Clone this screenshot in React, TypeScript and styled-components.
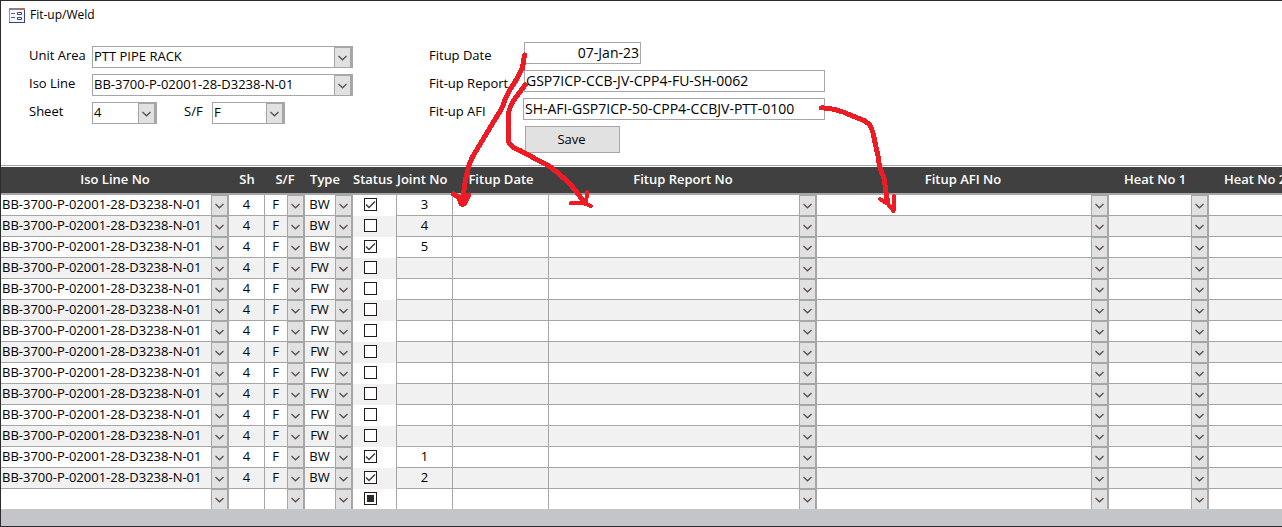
import React, { useEffect, useRef } from "react";
import styled, { createGlobalStyle, css } from "styled-components";

const line = "#a6a6a6";
const face = "#e1e1e1";
const dark = "#2b2b2e";

const GlobalStyle = createGlobalStyle`
  *, *::before, *::after { box-sizing: border-box; }
  html, body, #root { height: 100%; }
  body { margin: 0; overflow: hidden; background: #fff; }
  body, input, select, button {
    font-family: "Open Sans", "Noto Sans", Calibri, sans-serif;
    font-size: 13px;
    line-height: 18px;
    color: #000;
  }
`;

const Frame = styled.main`
  position: relative;
  display: flex;
  flex-direction: column;
  min-height: 100%;
  overflow: hidden;
  background: #fff;
  border: solid ${dark};
  border-width: 1px 0 1px 1px;
`;

const TitleBar = styled.header`
  display: flex;
  align-items: center;
  gap: 5px;
  height: 28px;
  padding-left: 8px;
`;

const Title = styled.h1`
  margin: 0;
  font-size: 12px;
  font-weight: 400;
`;

const FormHeader = styled.form`
  display: flex;
  align-items: flex-start;
  gap: 76px;
  height: 136px;
  padding: 13px 0 0 28px;
`;

const FieldColumn = styled.div<{ $inset?: number }>`
  display: flex;
  flex-direction: column;
  gap: 6px;
  padding-top: ${(p) => p.$inset ?? 0}px;
`;

const FieldRow = styled.div`
  display: flex;
  align-items: center;
  height: 22px;
`;

const Label = styled.label<{ $w: number; $low?: boolean }>`
  flex: none;
  width: ${(p) => p.$w}px;
  padding: ${(p) => (p.$low ? "4px 0 0" : "0 0 4px")};
  white-space: nowrap;
`;

const SecondPair = styled.div`
  display: flex;
  align-items: center;
  padding-left: 27px;
`;

const TextBox = styled.input<{ $w: number; $right?: boolean }>`
  width: ${(p) => p.$w}px;
  height: 22px;
  padding: 0 1px 2px;
  border: 1px solid ${line};
  border-radius: 0;
  background: #fff;
  font-size: 14px;
  text-align: ${(p) => (p.$right ? "right" : "left")};
`;

const SaveButton = styled.button`
  width: 95px;
  height: 27px;
  margin-left: 96px;
  padding: 0 2px 2px 0;
  border: 1px solid ${line};
  background: ${face};
`;

const ComboBox = styled.div<{ $w?: number; $framed?: boolean }>`
  display: grid;
  width: ${(p) => (p.$w ? `${p.$w}px` : "100%")};
  height: ${(p) => (p.$framed ? 22 : 20)}px;
  ${(p) => p.$framed && css`border: 1px solid ${line};`}
`;

const Select = styled.select<{ $center?: boolean }>`
  grid-area: 1 / 1;
  appearance: none;
  width: 100%;
  min-width: 0;
  height: 100%;
  margin: 0;
  padding: 0 ${(p) => (p.$center ? 20 : 18)}px 3px 1px;
  border: 0;
  border-radius: 0;
  background: transparent;
  text-align-last: ${(p) => (p.$center ? "center" : "left")};
`;

const DropFace = styled.span`
  grid-area: 1 / 1;
  justify-self: end;
  display: flex;
  align-items: center;
  justify-content: center;
  width: 18px;
  height: 100%;
  border: 1px solid ${line};
  border-right-width: 2px;
  background: ${face};
  pointer-events: none;
`;

const Sheet = styled.section`
  overflow: hidden;
  border-top: 1px solid ${line};
  padding-top: 1px;
`;

const Table = styled.table`
  width: 1308px;
  table-layout: fixed;
  border-collapse: separate;
  border-spacing: 0;
`;

const HeadCell = styled.th<{ $shift?: boolean }>`
  height: 28px;
  padding: 0 ${(p) => (p.$shift ? 8 : 0)}px 2px 0;
  border-bottom: 2px solid ${line};
  background: #404040;
  color: #fff;
  font-weight: 600;
  white-space: nowrap;
`;

const Row = styled.tr`
  background: #fff;
  &:nth-child(even) { background: #f1f1f1; }
  &:last-child > td { height: 20px; border-bottom: 0; }
`;

const Cell = styled.td<{ $ruled?: boolean }>`
  height: 21px;
  padding: 0;
  border-bottom: 1px solid ${line};
  border-right: ${(p) => (p.$ruled ? `1px solid ${line}` : "0")};
`;

const StatusCell = styled.td`
  height: 21px;
  padding: 0 8px 0 0;
  border-right: 1px solid ${line};
`;

const CellInput = styled.input`
  display: block;
  width: 100%;
  height: 20px;
  padding: 0 0 3px;
  border: 0;
  background: transparent;
  text-align: center;
`;

const CheckWrap = styled.div`
  display: grid;
  place-items: center;
  height: 20px;
  padding-bottom: 2px;
  > * { grid-area: 1 / 1; }
  > svg { pointer-events: none; }
`;

const CheckBox = styled.input`
  appearance: none;
  width: 13px;
  height: 13px;
  margin: 0;
  border: 1px solid #1f1a1c;
  background: #fff;
`;

const Footer = styled.footer`
  flex: 1;
  min-height: 17px;
  background: #c4c5c9;
`;

const Ink = styled.svg`
  position: absolute;
  top: -1px;
  left: -1px;
  pointer-events: none;
`;

function DropArrow() {
  return (
    <DropFace>
      <svg width="9" height="6" viewBox="0 0 9 6" fill="none" stroke="#5b4a4c" strokeWidth="1.2">
        <path d="M0.5 1 L4.5 4.8 L8.5 1" />
      </svg>
    </DropFace>
  );
}

type ComboProps = { value: string; id?: string; label?: string; width?: number; framed?: boolean; center?: boolean };

function Combo({ value, id, label, width, framed, center }: ComboProps) {
  return (
    <ComboBox $w={width} $framed={framed}>
      <Select id={id} aria-label={label} $center={center} defaultValue={value}>
        <option value={value}>{value}</option>
      </Select>
      <DropArrow />
    </ComboBox>
  );
}

type Status = "on" | "off" | "mixed";

function StatusBox({ status, label }: { status: Status; label: string }) {
  const ref = useRef<HTMLInputElement>(null);
  useEffect(() => {
    if (ref.current) ref.current.indeterminate = status === "mixed";
  }, [status]);
  return (
    <CheckWrap>
      <CheckBox ref={ref} type="checkbox" aria-label={label} defaultChecked={status === "on"} />
      {status === "on" && (
        <svg width="13" height="13" viewBox="0 0 13 13" fill="none" stroke="#3a3335" strokeWidth="1.3">
          <path d="M2 6.5 L5 9.5 L11 3.5" />
        </svg>
      )}
      {status === "mixed" && (
        <svg width="13" height="13" viewBox="0 0 13 13">
          <rect x="3" y="3" width="7" height="7" fill="#2a2a2a" />
        </svg>
      )}
    </CheckWrap>
  );
}

function FormIcon() {
  return (
    <svg width="16" height="15" viewBox="0 0 16 15">
      <rect x="0.5" y="0.5" width="15" height="14" fill="#f4f7fd" stroke="#8c97bb" />
      <rect x="0" y="0" width="16" height="2" fill="#8a7f8c" />
      <rect x="11" y="0" width="4" height="2" fill="#c46a3c" />
      <path d="M2 5.5h4M2 9.5h4" stroke="#5a6078" />
      <path d="M8.5 4.5h4v2h-4zM8.5 9.5h4v2h-4z" fill="#fff" stroke="#3b466f" />
      <path d="M15.5 2v13M0 14.5h16" stroke="#34447e" />
    </svg>
  );
}

const columns: { name: string; width: number; shift?: boolean }[] = [
  { name: "Iso Line No", width: 228 },
  { name: "Sh", width: 36 },
  { name: "S/F", width: 40 },
  { name: "Type", width: 48, shift: true },
  { name: "Status", width: 44, shift: true },
  { name: "Joint No", width: 56, shift: true },
  { name: "Fitup Date", width: 96 },
  { name: "Fitup Report No", width: 268 },
  { name: "Fitup AFI No", width: 292 },
  { name: "Heat No 1", width: 100, shift: true },
  { name: "Heat No 2", width: 100, shift: true },
];

type Joint = { iso: string; sh: string; sf: string; type: string; status: Status; joint: string };

const weld = (type: string, status: Status, joint = ""): Joint => ({
  iso: "BB-3700-P-02001-28-D3238-N-01",
  sh: "4",
  sf: "F",
  type,
  status,
  joint,
});

const joints: Joint[] = [
  weld("BW", "on", "3"),
  weld("BW", "off", "4"),
  weld("BW", "on", "5"),
  ...Array.from({ length: 9 }, () => weld("FW", "off")),
  weld("BW", "on", "1"),
  weld("BW", "on", "2"),
  { iso: "", sh: "", sf: "", type: "", status: "mixed", joint: "" },
];

export default function App() {
  return (
    <>
      <GlobalStyle />
      <Frame>
        <TitleBar>
          <FormIcon />
          <Title>Fit-up/Weld</Title>
        </TitleBar>
        <FormHeader onSubmit={(e) => e.preventDefault()}>
          <FieldColumn $inset={4}>
            <FieldRow>
              <Label $w={63} htmlFor="unit">Unit Area</Label>
              <Combo id="unit" value="PTT PIPE RACK" width={261} framed />
            </FieldRow>
            <FieldRow>
              <Label $w={63} htmlFor="iso">Iso Line</Label>
              <Combo id="iso" value="BB-3700-P-02001-28-D3238-N-01" width={261} framed />
            </FieldRow>
            <FieldRow>
              <Label $w={63} htmlFor="sheet">Sheet</Label>
              <Combo id="sheet" value="4" width={65} framed />
              <SecondPair>
                <Label $w={28} htmlFor="sf">S/F</Label>
                <Combo id="sf" value="F" width={73} framed />
              </SecondPair>
            </FieldRow>
          </FieldColumn>
          <FieldColumn>
            <FieldRow>
              <Label $w={95} $low htmlFor="date">Fitup Date</Label>
              <TextBox id="date" $w={117} $right defaultValue="07-Jan-23" />
            </FieldRow>
            <FieldRow>
              <Label $w={95} $low htmlFor="report">Fit-up Report</Label>
              <TextBox id="report" $w={301} defaultValue="GSP7ICP-CCB-JV-CPP4-FU-SH-0062" />
            </FieldRow>
            <FieldRow>
              <Label $w={94} $low htmlFor="afi">Fit-up AFI</Label>
              <TextBox id="afi" $w={302} defaultValue="SH-AFI-GSP7ICP-50-CPP4-CCBJV-PTT-0100" />
            </FieldRow>
            <SaveButton type="submit">Save</SaveButton>
          </FieldColumn>
        </FormHeader>
        <Sheet>
          <Table>
            <colgroup>
              {columns.map((c) => (
                <col key={c.name} width={c.width} />
              ))}
            </colgroup>
            <thead>
              <tr>
                {columns.map((c) => (
                  <HeadCell key={c.name} scope="col" $shift={c.shift}>{c.name}</HeadCell>
                ))}
              </tr>
            </thead>
            <tbody>
              {joints.map((j, i) => (
                <Row key={i}>
                  <Cell><Combo label="Iso Line No" value={j.iso} /></Cell>
                  <Cell $ruled><CellInput aria-label="Sh" defaultValue={j.sh} /></Cell>
                  <Cell><Combo label="S/F" value={j.sf} center /></Cell>
                  <Cell><Combo label="Type" value={j.type} center /></Cell>
                  <StatusCell><StatusBox label="Status" status={j.status} /></StatusCell>
                  <Cell $ruled><CellInput aria-label="Joint No" defaultValue={j.joint} /></Cell>
                  <Cell $ruled><CellInput aria-label="Fitup Date" /></Cell>
                  <Cell><Combo label="Fitup Report No" value="" /></Cell>
                  <Cell><Combo label="Fitup AFI No" value="" /></Cell>
                  <Cell><Combo label="Heat No 1" value="" /></Cell>
                  <Cell><Combo label="Heat No 2" value="" /></Cell>
                </Row>
              ))}
            </tbody>
          </Table>
        </Sheet>
        <Footer />
        <Ink width="1282" height="527" viewBox="0 0 1282 527" fill="none" stroke="#ed1c24" strokeWidth="5" strokeLinecap="round" strokeLinejoin="round" shapeRendering="crispEdges" aria-hidden="true">
          <path d="M524.5 55 L522.5 68 L515 82 C509 90 505 99 502 108 L488 131 L473 156 C468 165 467 174 465.5 180 L462 203" />
          <path d="M453.5 194 L460 198 L469 195 L464 204 L461 204 L459 197" fill="#ed1c24" />
          <path d="M525 85 L514 100 C509 108 508 112 508 118 L508.500 142 C511 146 513 148 519 150 L548 165.500 C557 171 562 177 568 182 C575 189 580 197 585 203" />
          <path strokeWidth="4" d="M587 192 L586 204 M571 203 L584 203 L591 206" />
          <path d="M821 108 C829 107.500 837 110 843 112 L865 121 C871 125 871 127 873 133 L878 156 C879 166 881 172 884 178 L887.500 202" />
          <path strokeWidth="4" d="M880 199 L888 204 L893.500 211 L894 196" />
        </Ink>
      </Frame>
    </>
  );
}
